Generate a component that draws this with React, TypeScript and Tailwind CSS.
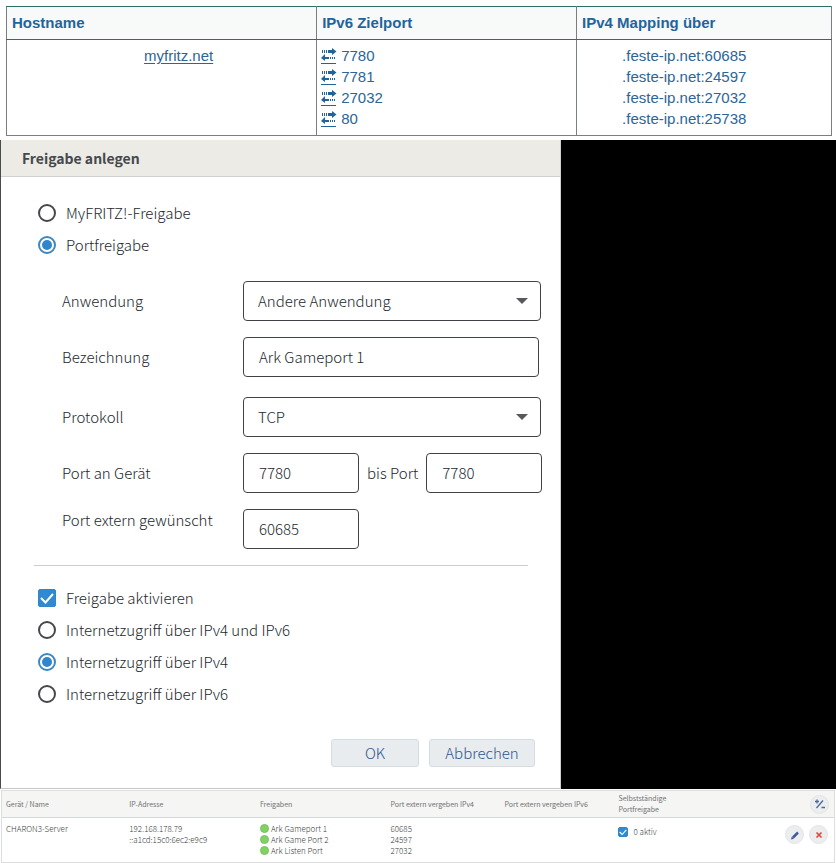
import type { ReactNode } from "react";

const mappings = [
  { port: "7780", target: ".feste-ip.net:60685" },
  { port: "7781", target: ".feste-ip.net:24597" },
  { port: "27032", target: ".feste-ip.net:27032" },
  { port: "80", target: ".feste-ip.net:25738" },
];

const shares = [
  { name: "Ark Gameport 1", port: "60685" },
  { name: "Ark Game Port 2", port: "24597" },
  { name: "Ark Listen Port", port: "27032" },
];

function TransferIcon() {
  return (
    <svg width="16" height="16" viewBox="0 0 16 16" fill="#1f659c" aria-hidden="true">
      <path d="M1 2h1v3H1zM3 2h1v3H3zM5 2h1v3H5zM7 2h4V0l4.500 3.500L11 7V5H7z" />
      <path d="M13 9h1v2h-1zM11 9h1v2h-1zM9 9h1v2H9zM8 9H4V6L0 10l4 3v-2h4z" />
      <path d="M0 15h15v1H0z" />
    </svg>
  );
}

function MappingTable() {
  return (
    <table className="w-full table-fixed border-collapse font-['Liberation_Sans',Arial,sans-serif] text-[15px] leading-[21px] text-[#2c6596]">
      <colgroup>
        <col className="w-[37.6%]" />
        <col className="w-[31.5%]" />
        <col />
      </colgroup>
      <thead>
        <tr className="bg-[#f8f9f9] text-left text-[#1f659c]">
          {["Hostname", "IPv6 Zielport", "IPv4 Mapping über"].map((title) => (
            <th key={title} className="border border-x-[#7b7d80] border-y-[#2c6f66] px-[5px] pt-[5px] pb-1.5 font-bold">
              {title}
            </th>
          ))}
        </tr>
      </thead>
      <tbody>
        <tr className="align-top">
          <td className="border border-[#7b7d80] border-t-[#2c6f66] pt-[5px] pl-[137px]">
            <a href="#host" className="underline underline-offset-2">
              myfritz.net
            </a>
          </td>
          <td className="border border-[#7b7d80] border-t-[#2c6f66] px-1 pt-[5px] pb-1.5">
            <ul>
              {mappings.map((m) => (
                <li key={m.port} className="flex items-center gap-1">
                  <a href={`#port-${m.port}`} aria-label={`Port ${m.port}`}>
                    <TransferIcon />
                  </a>
                  {m.port}
                </li>
              ))}
            </ul>
          </td>
          <td className="border border-[#7b7d80] border-t-[#2c6f66] pt-[5px] pl-[45px]">
            <ul>
              {mappings.map((m) => (
                <li key={m.port}>{m.target}</li>
              ))}
            </ul>
          </td>
        </tr>
      </tbody>
    </table>
  );
}

function Radio({ name, label, checked = false }: { name: string; label: string; checked?: boolean }) {
  return (
    <label className="flex h-8 items-center gap-2.5">
      <input
        type="radio"
        name={name}
        defaultChecked={checked}
        className="size-[18px] shrink-0 appearance-none rounded-full border-2 border-[#45494d] bg-white bg-clip-content p-0.5 checked:border-[#3f87bf] checked:bg-[#2f86cb]"
      />
      {label}
    </label>
  );
}

function CheckBox({ id, small = false }: { id: string; small?: boolean }) {
  return (
    <span className={small ? "relative size-2.5 shrink-0" : "relative size-[18px] shrink-0"}>
      <input
        id={id}
        type="checkbox"
        defaultChecked
        className="block size-full appearance-none rounded-xs border border-[#2f86cb] bg-white checked:bg-[#2f8ad2]"
      />
      <svg viewBox="0 0 18 18" className="pointer-events-none absolute inset-0 size-full" fill="none" stroke="#fff" strokeWidth="2" aria-hidden="true">
        <path d="M3 9l4.500 4.500L15 5" />
      </svg>
    </span>
  );
}

function SelectBox({ id, value }: { id: string; value: string }) {
  return (
    <div className="relative min-w-0 flex-1">
      <select id={id} defaultValue={value} className="h-10 w-full appearance-none rounded-[4px] border border-[#3f4347] bg-white px-3.5">
        <option>{value}</option>
      </select>
      <svg width="12" height="6" viewBox="0 0 12 6" className="pointer-events-none absolute top-[17px] right-[13px]" fill="#55595d" aria-hidden="true">
        <path d="M0 0h12L6 6z" />
      </svg>
    </div>
  );
}

function TextBox({ id, value, wide = false }: { id: string; value: string; wide?: boolean }) {
  return (
    <input
      id={id}
      defaultValue={value}
      className={
        (wide ? "mr-0.5 min-w-0 flex-1" : "w-29 shrink-0") + " h-10 rounded-[4px] border border-[#3f4347] bg-white px-[15px] pb-0.5"
      }
    />
  );
}

function Row({ id, label, top = false, children }: { id: string; label: string; top?: boolean; children: ReactNode }) {
  return (
    <div className={top ? "flex items-start" : "flex items-center"}>
      <label htmlFor={id} className="w-[181px] shrink-0">
        {label}
      </label>
      {children}
    </div>
  );
}

function ShareDialog() {
  return (
    <section className="w-full max-w-[561px] border-r border-b border-l border-r-[#cfd1d2] border-b-[#c4c6c7] border-l-[#4b4b4f] bg-white text-[15px] leading-[22px] font-light text-[#23282d]">
      <h2 className="border-b border-[#d0d2d2] bg-[#ecebe6] px-[21px] pt-[7px] pb-[7px] text-[14px] font-bold text-[#45494d]">
        Freigabe anlegen
      </h2>
      <form className="pt-5 pb-[21px]" onSubmit={(e) => e.preventDefault()}>
        <div className="px-[37px]">
          <Radio name="kind" label="MyFRITZ!-Freigabe" />
          <Radio name="kind" label="Portfreigabe" checked />
        </div>
        <div className="mt-5 flex flex-col gap-4 pr-[19px] pl-[61px]">
          <Row id="app" label="Anwendung">
            <SelectBox id="app" value="Andere Anwendung" />
          </Row>
          <Row id="name" label="Bezeichnung">
            <TextBox id="name" value="Ark Gameport 1" wide />
          </Row>
          <div className="pt-1">
            <Row id="proto" label="Protokoll">
              <SelectBox id="proto" value="TCP" />
            </Row>
          </div>
          <Row id="from" label="Port an Gerät">
            <TextBox id="from" value="7780" />
            <label htmlFor="to" className="px-2 whitespace-nowrap">
              bis Port
            </label>
            <TextBox id="to" value="7780" />
          </Row>
          <Row id="ext" label="Port extern gewünscht" top>
            <TextBox id="ext" value="60685" />
          </Row>
        </div>
        <hr className="mt-4 mr-8 ml-[33px] border-[#cbcdce]" />
        <div className="mt-4 px-[37px]">
          <div className="flex h-8 items-center gap-2.5">
            <CheckBox id="active" />
            <label htmlFor="active">Freigabe aktivieren</label>
          </div>
          <Radio name="access" label="Internetzugriff über IPv4 und IPv6" />
          <Radio name="access" label="Internetzugriff über IPv4" checked />
          <Radio name="access" label="Internetzugriff über IPv6" />
        </div>
        <div className="mt-[29px] flex justify-end gap-2.5 pr-[25px] text-[#2f5590]">
          <button type="submit" className="h-7 w-22 rounded-[3px] border border-[#d3dce3] bg-[#e8ecee]">
            OK
          </button>
          <button type="button" className="h-7 w-[106px] rounded-[3px] border border-[#d3dce3] bg-[#e8ecee]">
            Abbrechen
          </button>
        </div>
      </form>
    </section>
  );
}

function RoundButton({ label, children }: { label: string; children: ReactNode }) {
  return (
    <button type="button" aria-label={label} className="flex size-[19px] items-center justify-center rounded-full border border-[#e3e4e5] bg-[#ecedee]">
      <svg width="12" height="12" viewBox="0 0 12 12" fill="none" aria-hidden="true">
        {children}
      </svg>
    </button>
  );
}

function DeviceTable() {
  return (
    <table className="w-full table-fixed border-separate border-spacing-0 border border-[#dcdedd] bg-white text-left text-[7px] leading-[11px] text-[#707274]">
      <colgroup>
        <col className="w-[14.7%]" />
        <col className="w-[15.7%]" />
        <col className="w-[15.7%]" />
        <col className="w-[13.7%]" />
        <col className="w-[13.7%]" />
        <col className="w-[15%]" />
        <col />
      </colgroup>
      <thead className="bg-[#f5f5f3]">
        <tr>
          {["Gerät / Name", "IP-Adresse", "Freigaben", "Port extern vergeben IPv4", "Port extern vergeben IPv6"].map((title) => (
            <th key={title} className="border-b border-[#d5d9d9] pl-[5px] font-normal whitespace-nowrap first:pl-1">
              {title}
            </th>
          ))}
          <th className="border-b border-[#d5d9d9] py-0.5 pl-[5px] font-normal">
            Selbstständige
            <br />
            Portfreigabe
          </th>
          <th className="border-b border-[#d5d9d9] pr-[5px]">
            <div className="flex justify-end">
              <RoundButton label="Auswahl ändern">
                <path d="M1 3.500h4M3 1.500v4M7.500 9.500H11M2.500 10L9 2.500" stroke="#4a6a9c" strokeWidth="1.300" />
              </RoundButton>
            </div>
          </th>
        </tr>
      </thead>
      <tbody className="align-top text-[8px] font-light text-[#3c3e40]">
        <tr>
          <td className="pt-[5px] pb-1.5 pl-1">CHARON3-Server</td>
          <td className="pt-[5px] pl-[5px]">
            192.168.178.79
            <br />
            ::a1cd:15c0:6ec2:e9c9
          </td>
          <td className="pt-[5px] pb-1.5 pl-[5px]">
            <ul>
              {shares.map((s) => (
                <li key={s.port} className="flex items-center gap-0.5">
                  <span className="size-[9px] rounded-full border border-[#7cbd6c] bg-[#7fd45f]" />
                  {s.name}
                </li>
              ))}
            </ul>
          </td>
          <td className="pt-[5px] pl-[5px]">
            <ul>
              {shares.map((s) => (
                <li key={s.port}>{s.port}</li>
              ))}
            </ul>
          </td>
          <td />
          <td className="pt-2 pl-[5px]">
            <div className="flex items-center gap-[5px]">
              <CheckBox id="auto" small />
              <label htmlFor="auto">0 aktiv</label>
            </div>
          </td>
          <td className="pt-[7px] pr-1.5">
            <div className="flex justify-end gap-[5px]">
              <RoundButton label="Bearbeiten">
                <path d="M4 8.500L9 3.500" stroke="#3d5a9a" strokeWidth="2.500" />
                <path d="M2 10.500l.8-3 2.200 2.200z" fill="#3d5a9a" />
              </RoundButton>
              <RoundButton label="Löschen">
                <path d="M3.500 3.500l5 5M8.500 3.500l-5 5" stroke="#dc4a3d" strokeWidth="1.700" />
              </RoundButton>
            </div>
          </td>
        </tr>
      </tbody>
    </table>
  );
}

export default function App() {
  return (
    <main className="bg-white font-['Noto_Sans_CJK_SC',sans-serif]">
      <div className="pt-1.5 pr-1 pb-1 pl-1.5">
        <MappingTable />
      </div>
      <div className="flex bg-black">
        <ShareDialog />
      </div>
      <div className="pt-px pr-px pl-px">
        <DeviceTable />
      </div>
    </main>
  );
}
